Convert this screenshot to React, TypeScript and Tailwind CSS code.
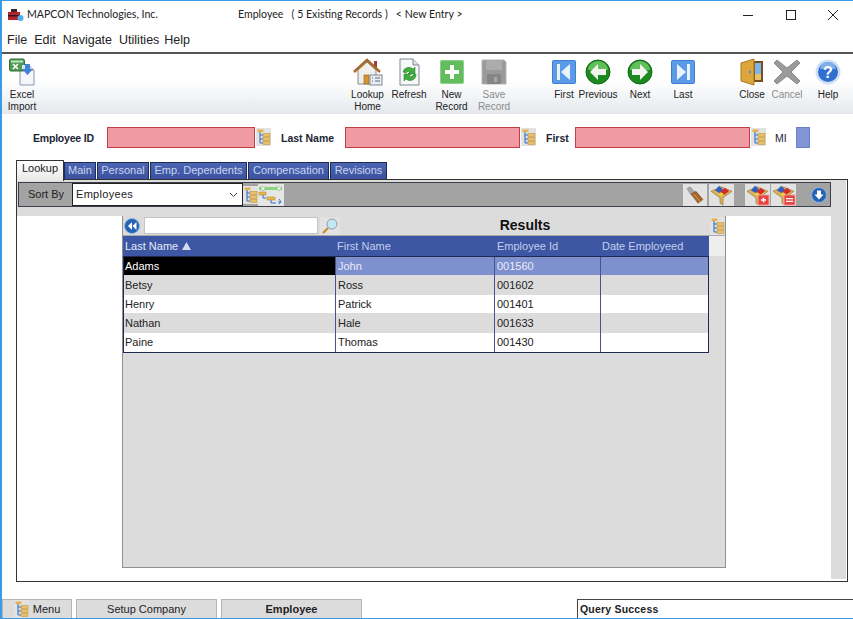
const Excel = () => (
  <svg width="28" height="28" viewBox="0 0 28 28" className="ml-[2px]">
    <path d="M11 7h9l5 5v15H11z" fill="#f4f6fa" stroke="#8b98ad" />
    <path d="M20 7v5h5" fill="#dfe5ee" stroke="#8b98ad" />
    <rect x="0.5" y="1" width="15" height="12" rx="1.5" fill="#4e9a52" stroke="#2f6f37" />
    <rect x="2" y="2.5" width="12" height="2" fill="#bfe3bd" />
    <path d="M4 6l5 5M9 6l-5 5" stroke="#fff" strokeWidth="1.6" />
    <path d="M13 7h6v4h-6z" fill="#dbe7f8" />
    <path d="M16 6h5v5h3l-5.500 6-5.500-6h3z" fill="#3f80d8" />
  </svg>
);

const Home = () => (
  <svg width="30" height="28" viewBox="0 0 30 28">
    <path d="M5 12v14h18V12L14 4z" fill="#f1efe9" stroke="#8a8a84" />
    <rect x="21" y="3" width="3" height="6" fill="#a8383a" />
    <path d="M1 14L14 2l13 12" fill="none" stroke="#a8672c" strokeWidth="2.400" />
    <rect x="11" y="17" width="5" height="9" fill="#d9952f" stroke="#8f5c1d" strokeWidth="0.6" />
    <rect x="17" y="17" width="12" height="10" fill="#e9edf2" stroke="#7c8794" />
    <path d="M19 20h1M22 20h5M19 23h1M22 23h5" stroke="#5c6b7c" />
  </svg>
);

const Refresh = () => (
  <svg width="22" height="28" viewBox="0 0 22 28">
    <path d="M2 1h13l6 6v20H2z" fill="#f6f8fa" stroke="#7c8794" />
    <path d="M15 1v6h6" fill="#dde3ea" stroke="#7c8794" />
    <path d="M5 14a6 6 0 0 1 10-3l2-2v7h-7l2-2a3 3 0 0 0-4 1z" fill="#3fae3f" stroke="#237a27" strokeWidth="0.5" />
    <path d="M18 16a6 6 0 0 1-10 5l-2 2v-7h7l-2 2a3 3 0 0 0 4-1z" fill="#3fae3f" stroke="#237a27" strokeWidth="0.5" />
  </svg>
);

const NewRecord = () => (
  <svg width="24" height="24" viewBox="0 0 24 24">
    <rect x="0.5" y="0.5" width="23" height="23" rx="1" fill="#62bd5c" stroke="#8fd18a" />
    <path d="M10 5h4v5h5v4h-5v5h-4v-5H5v-4h5z" fill="#fff" />
  </svg>
);

const SaveRecord = () => (
  <svg width="26" height="26" viewBox="0 0 26 26">
    <path d="M1 1h22l2 2v22H1z" fill="#9a9a9a" stroke="#b5b5b5" />
    <rect x="5" y="2" width="16" height="9" fill="#acacac" />
    <rect x="6" y="15" width="14" height="10" fill="#858585" />
    <rect x="13" y="18" width="3" height="5" fill="#a6a6a6" />
  </svg>
);

const NavSquare = ({ last }: { last?: boolean }) => (
  <svg width="24" height="24" viewBox="0 0 24 24">
    <rect x="0.5" y="0.5" width="23" height="23" rx="1" fill="#5a9ae6" stroke="#3e7fd0" />
    {last ? <path d="M6 4l9 8-9 8zM16 4h3v16h-3z" fill="#eaf3fd" /> : <path d="M18 4l-9 8 9 8zM5 4h3v16H5z" fill="#eaf3fd" />}
  </svg>
);

const NavCircle = ({ next }: { next?: boolean }) => (
  <svg width="26" height="26" viewBox="0 0 26 26">
    <circle cx="13" cy="13" r="12" fill="#1c8a1f" stroke="#0f6a14" />
    <path d="M3 11a10 9 0 0 1 20 0z" fill="#62c05c" />
    {next ? <path d="M5 10h8V5l8 8-8 8v-5H5z" fill="#f1f5ee" /> : <path d="M21 10h-8V5l-8 8 8 8v-5h8z" fill="#f1f5ee" />}
  </svg>
);

const Door = () => (
  <svg width="24" height="28" viewBox="0 0 24 28">
    <rect x="12" y="3" width="11" height="21" fill="#7a4d1e" />
    <rect x="15" y="5" width="6" height="17" fill="#7fb6e6" />
    <path d="M15 16h6v6h-6z" fill="#e3c26a" />
    <path d="M1 5l13-4v26L1 23z" fill="#dca63a" stroke="#a8761f" />
    <circle cx="10" cy="14" r="1.200" fill="#5c8fd0" />
  </svg>
);

const Cancel = () => (
  <svg width="26" height="26" viewBox="0 0 26 26">
    <path d="M3 1l10 8 10-8 3 3-9 9 9 9-3 3-10-8-10 8-3-3 9-9-9-9z" fill="#9b9b9b" stroke="#8a8a8a" />
  </svg>
);

const Help = () => (
  <svg width="26" height="26" viewBox="0 0 26 26">
    <circle cx="13" cy="13" r="12.500" fill="#cfe0f4" />
    <circle cx="13" cy="13" r="10" fill="#2f6fd0" />
    <path d="M5 10a8 7 0 0 1 16 0z" fill="#7faee8" />
    <text x="13" y="19" textAnchor="middle" fontSize="16" fontWeight="700" fontFamily="Liberation Sans" fill="#fff">?</text>
  </svg>
);

const Tree = () => (
  <svg width="15" height="18" viewBox="0 0 15 18" className="shrink-0">
    <rect width="15" height="18" fill="#e2e2e2" />
    <rect x="1.500" y="1.500" width="6" height="2.500" fill="#e8b04a" />
    <path d="M4 4v11M4 7h3M4 11h3M4 15h3" stroke="#2f6fd0" strokeWidth="1.100" fill="none" />
    <rect x="7" y="5.500" width="7" height="3" fill="#e9c06a" stroke="#b98a2c" strokeWidth="0.500" />
    <rect x="7" y="9.500" width="7" height="3" fill="#e9c06a" stroke="#b98a2c" strokeWidth="0.500" />
    <rect x="7" y="13.500" width="7" height="3" fill="#e9c06a" stroke="#b98a2c" strokeWidth="0.500" />
  </svg>
);

const TreeSort = () => (
  <svg width="26" height="22" viewBox="0 0 26 22" className="shrink-0">
    <rect width="26" height="22" fill="#e6e6e6" />
    <rect x="1" y="3" width="23" height="3" fill="#8bd67f" />
    <path d="M2 3l3 4 3-4zM18 3l3 4 3-4z" fill="#fff" stroke="#5aa650" strokeWidth="0.500" />
    <rect x="1" y="8" width="7" height="3" fill="#e9b850" stroke="#a87c22" strokeWidth="0.500" />
    <rect x="9" y="13" width="8" height="3" fill="#e9b850" stroke="#a87c22" strokeWidth="0.500" />
    <path d="M5 11v3h3M13 16v3h5M20 18l3 0M21 15l2 3-2 2" stroke="#2f6fd0" fill="none" />
  </svg>
);

const Brush = () => (
  <svg width="24" height="22" viewBox="0 0 24 24" preserveAspectRatio="none" className="shrink-0">
    <rect width="24" height="24" fill="#e2e2e2" />
    <path d="M4 5l3-2 5 6-4 3z" fill="#a9a9a9" stroke="#777" strokeWidth="0.500" />
    <path d="M8 11l5-3 7 9-5 4z" fill="#a5642c" stroke="#6f3f18" strokeWidth="0.500" />
    <path d="M11 11l6 8" stroke="#d9a56a" />
  </svg>
);

const Funnel = ({ mark }: { mark?: "plus" | "minus" }) => (
  <svg width="25" height="22" viewBox="0 0 25 24" preserveAspectRatio="none" className="shrink-0">
    <rect width="25" height="24" fill="#e2e2e2" />
    <path d="M2 8l10-5 11 5-9 7v8l-3-2v-6z" fill="#dcb15a" stroke="#8a6a20" strokeWidth="0.600" />
    <path d="M6 7l4-5 4 4-3 4z" fill="#2f5fc0" />
    <path d="M11 9l5-5 4 4-5 4z" fill="#d42a2a" />
    <path d="M9 11l3-2 3 2-3 2z" fill="#e9d33a" />
    {mark && <rect x="13" y="12" width="11" height="11" fill="#e8433f" stroke="#f3a09c" />}
    {mark === "plus" && <path d="M16 17.500h5M18.500 15v5" stroke="#fff" strokeWidth="1.600" />}
    {mark === "minus" && <path d="M15 16h7M15 19h7" stroke="#fff" strokeWidth="1.400" />}
  </svg>
);

const RoundArrow = ({ down }: { down?: boolean }) => (
  <svg width="16" height="16" viewBox="0 0 16 16" className="shrink-0">
    <circle cx="8" cy="8" r="7.500" fill="#2563b5" stroke="#8fb4e2" />
    {down ? (
      <path d="M6 3.500h4v4h2.500L8 12.500 3.500 7.500H6z" fill="#fff" />
    ) : (
      <path d="M8 4L4 8l4 4zM12.500 4l-4 4 4 4z" fill="#fff" />
    )}
  </svg>
);

const Magnifier = () => (
  <svg width="20" height="18" viewBox="0 0 20 18" className="shrink-0">
    <rect width="20" height="18" fill="#e2e2e2" />
    <circle cx="12" cy="7" r="5" fill="#c4e6f5" stroke="#8aa0ac" />
    <path d="M8 11l-5 5" stroke="#c98a24" strokeWidth="2.200" />
  </svg>
);

const tools = [
  { w: "w-[32px]", label: ["First"], icon: <NavSquare /> },
  { w: "w-[36px]", label: ["Previous"], icon: <NavCircle /> },
  { w: "w-[48px]", label: ["Next"], icon: <NavCircle next /> },
  { w: "w-[38px]", label: ["Last"], icon: <NavSquare last /> },
];

const ToolButton = ({ w, label, icon, off }: { w: string; label: string[]; icon: React.ReactNode; off?: boolean }) => (
  <div className={`${w} flex flex-col items-center shrink-0`}>
    <div className="h-[31px] mb-[2px] flex items-center justify-center">{icon}</div>
    {label.map((l) => (
      <span key={l} className={`text-[10px] leading-[12px] whitespace-nowrap ${off ? "text-[#8c8c8c]" : "text-[#222]"}`}>
        {l}
      </span>
    ))}
  </div>
);

const rows = [
  { cells: ["Adams", "John", "001560"], h: "h-[18px]" },
  { cells: ["Betsy", "Ross", "001602"], h: "h-[20px]" },
  { cells: ["Henry", "Patrick", "001401"], h: "h-[18px]" },
  { cells: ["Nathan", "Hale", "001633"], h: "h-[20px]" },
  { cells: ["Paine", "Thomas", "001430"], h: "h-[19px]" },
];

const tabs = [
  { t: "Main", w: "w-[32px]" },
  { t: "Personal", w: "w-[52px]" },
  { t: "Emp. Dependents", w: "w-[97px]" },
  { t: "Compensation", w: "w-[81px]" },
  { t: "Revisions", w: "w-[57px]" },
];

export default function App() {
  return (
    <div className="w-[853px] h-[619px] overflow-hidden flex flex-col bg-white border-t border-b border-l-2 border-[#3b9ae6] font-['Liberation_Sans',Arial,sans-serif] text-[#222]">
      {/* Title bar */}
      <div className="h-[27px] shrink-0 flex items-center pl-[6px]">
        <svg width="16" height="14" viewBox="0 0 16 14" className="shrink-0">
          <rect x="0" y="4" width="12" height="8" fill="#b5232b" />
          <rect x="3" y="1" width="6" height="3" fill="#3a2326" />
          <rect x="0" y="7" width="12" height="1.500" fill="#2a1a1c" />
          <circle cx="12.500" cy="10" r="3" fill="#4db0e8" />
        </svg>
        <span className="ml-[3px] w-[211px] font-['Lato',sans-serif] text-[10.6px] whitespace-nowrap">MAPCON Technologies, Inc.</span>
        <span className="font-['Lato',sans-serif] text-[10.6px] whitespace-pre">Employee   ( 5 Existing Records )   &lt; New Entry &gt;</span>
        <div className="ml-auto flex items-center">
          <svg width="12" height="12" viewBox="0 0 12 12" className="mr-[31px]"><path d="M1 6.500h10" stroke="#222" /></svg>
          <svg width="12" height="12" viewBox="0 0 12 12" className="mr-[30px]"><rect x="1.500" y="1.500" width="9" height="9" fill="none" stroke="#222" /></svg>
          <svg width="12" height="12" viewBox="0 0 12 12" className="mr-[14px]"><path d="M1 1l10 10M11 1L1 11" stroke="#222" /></svg>
        </div>
      </div>

      {/* Menu */}
      <div className="h-[26px] shrink-0 border-b-2 border-[#555] flex gap-[7px] pl-[5px] pt-[5px] text-[12.5px] leading-[15px]">
        <span>File</span>
        <span>Edit</span>
        <span>Navigate</span>
        <span>Utilities</span>
        <span className="-ml-[2px]">Help</span>
      </div>

      {/* Toolbar */}
      <div className="h-[60px] shrink-0 flex pt-[2px] bg-linear-to-b from-white from-45% to-[#e4e8ec]">
        <ToolButton w="w-[40px]" label={["Excel", "Import"]} icon={<Excel />} />
        <div className="w-[305px] shrink-0" />
        <ToolButton w="w-[41px]" label={["Lookup", "Home"]} icon={<Home />} />
        <ToolButton w="w-[42px]" label={["Refresh"]} icon={<Refresh />} />
        <ToolButton w="w-[43px]" label={["New", "Record"]} icon={<NewRecord />} />
        <ToolButton w="w-[42px]" label={["Save", "Record"]} icon={<SaveRecord />} off />
        <div className="w-[33px] shrink-0" />
        {tools.map((t) => (
          <ToolButton key={t.label[0]} w={t.w} label={t.label} icon={t.icon} />
        ))}
        <div className="w-[32px] shrink-0" />
        <ToolButton w="w-[36px]" label={["Close"]} icon={<Door />} />
        <ToolButton w="w-[34px]" label={["Cancel"]} icon={<Cancel />} off />
        <ToolButton w="w-[48px]" label={["Help"]} icon={<Help />} />
      </div>

      {/* Key fields */}
      <div className="h-[46px] shrink-0 flex items-start pt-[13px] text-[10.5px] font-bold text-[#1c2433]">
        <span className="w-[105px] pl-[31px] leading-[23px] tracking-[-0.2px] shrink-0">Employee ID</span>
        <div className="w-[148px] h-[21px] shrink-0 bg-[#f09aa3] border border-[#c23f45]" />
        <div className="ml-[1px] mt-[1px]"><Tree /></div>
        <span className="w-[74px] pl-[10px] leading-[23px] shrink-0">Last Name</span>
        <div className="w-[175px] h-[21px] shrink-0 bg-[#f09aa3] border border-[#c23f45]" />
        <div className="ml-[1px] mt-[1px]"><Tree /></div>
        <span className="w-[39px] pl-[10px] leading-[23px] shrink-0">First</span>
        <div className="w-[175px] h-[21px] shrink-0 bg-[#f09aa3] border border-[#c23f45]" />
        <div className="ml-[1px] mt-[1px]"><Tree /></div>
        <span className="w-[30px] pl-[9px] leading-[23px] shrink-0 font-normal">MI</span>
        <div className="w-[14px] h-[21px] shrink-0 bg-[#8294d3] border border-[#6a80c8]" />
      </div>

      {/* Tabs */}
      <div className="h-[19px] shrink-0 flex items-end pl-[14px] text-[11px] relative z-10">
        <div className="w-[48px] h-[21px] -mb-[2px] bg-linear-to-b from-white to-[#e8e8e8] border border-b-0 border-[#333] text-center leading-[15px] shrink-0 rounded-t-[1px]">Lookup</div>
        {tabs.map((tab) => (
          <div key={tab.t} className={`${tab.w} h-[17px] mr-[1px] shrink-0 bg-linear-to-b from-[#4d66b4] to-[#3a52a0] border border-b-0 border-[#1f2b55] text-[#c9d3ee] text-center leading-[15px] whitespace-nowrap`}>
            {tab.t}
          </div>
        ))}
      </div>

      {/* Panel */}
      <div className="w-[832px] h-[403px] ml-[14px] shrink-0 border border-[#333] bg-white flex">
        <div className="w-[814px] shrink-0 flex flex-col">
          {/* Sort bar */}
          <div className="bg-[#dcdcdc] h-[36px] shrink-0 pt-[2px] pl-[1px]">
            <div className="h-[25px] bg-[#a3a3a3] border border-[#3a3f4a] flex items-center text-[11px]">
              <span className="w-[53px] pl-[9px] shrink-0 text-[#222]">Sort By</span>
              <div className="w-[171px] h-[23px] shrink-0 bg-white border border-[#222] flex items-center justify-between pl-[3px] pr-[4px] tracking-[0.3px]">
                Employees
                <svg width="9" height="6" viewBox="0 0 9 6"><path d="M1 1l3.500 3.500L8 1" fill="none" stroke="#444" /></svg>
              </div>
              <Tree />
              <TreeSort />
              <div className="ml-auto flex items-center gap-[2px]">
                <Brush />
                <Funnel />
              </div>
              <div className="ml-[11px] flex items-center gap-[1px]">
                <Funnel mark="plus" />
                <Funnel mark="minus" />
              </div>
              <div className="ml-[15px] mr-[3px]"><RoundArrow down /></div>
            </div>
          </div>

          {/* Results panel */}
          <div className="flex-1 bg-white pl-[105px]">
            <div className="w-[604px] h-[352px] bg-[#dcdcdc] border-b border-l border-r border-[#8f8f8f] flex flex-col">
              <div className="h-[19px] shrink-0 flex items-center pl-[1px]">
                <RoundArrow />
                <div className="ml-[4px] w-[174px] h-[17px] shrink-0 bg-white border border-[#c4c4c4]" />
                <div className="ml-[2px]"><Magnifier /></div>
                <span className="w-[370px] shrink-0 text-center text-[14px] font-bold text-[#111]">Results</span>
                <Tree />
              </div>
              <div className="flex-1 flex flex-col border-t border-[#a9a9a9]">
                <div className="flex">
                  <div className="w-[586px] shrink-0">
                    <div className="h-[20px] grid grid-cols-[212px_159px_106px_109px] items-center bg-[#3e57a5] text-[11px] text-[#c4cfeb]">
                      <span className="pl-[2px] text-[#e6ebf7] flex items-center gap-[4px]">
                        Last Name
                        <svg width="9" height="8" viewBox="0 0 9 8"><path d="M4.500 0L9 8H0z" fill="#d5dcf0" /></svg>
                      </span>
                      <span className="pl-[2px]">First Name</span>
                      <span className="pl-[3px]">Employee Id</span>
                      <span className="pl-[2px]">Date Employeed</span>
                    </div>
                    <div className="border border-[#1e2a4e] text-[11px]">
                      {rows.map((r, i) => (
                        <div
                          key={r.cells[0]}
                          className={`${r.h} grid grid-cols-[211px_159px_106px_108px] items-stretch ${i === 0 ? "bg-[#7f90cf] text-[#e8ecf8]" : i % 2 === 1 ? "bg-[#dcdcdc]" : "bg-white"}`}
                        >
                          <span className={`flex items-center pl-[1px] ${i === 0 ? "bg-black text-white" : ""}`}>{r.cells[0]}</span>
                          <span className="flex items-center pl-[2px] border-l border-[#45558a]">{r.cells[1]}</span>
                          <span className="flex items-center pl-[2px] border-l border-[#45558a]">{r.cells[2]}</span>
                          <span className="border-l border-[#45558a]" />
                        </div>
                      ))}
                    </div>
                  </div>
                  <div className="w-[16px] shrink-0">
                    <div className="h-[20px] bg-[#eeeeee]" />
                  </div>
                </div>
              </div>
            </div>
          </div>
        </div>
        <div className="w-[15px] shrink-0 mb-[2px] bg-[#dcdcdc]" />
      </div>

      {/* Bottom bar */}
      <div className="flex-1 flex items-end text-[11px]">
        <div className="w-[70px] h-[19px] shrink-0 bg-[#dcdcdc] border border-b-0 border-[#b5b5b5] flex items-center justify-center gap-[4px]">
          <Tree />
          Menu
        </div>
        <div className="ml-[4px] w-[141px] h-[19px] shrink-0 bg-[#dcdcdc] border border-b-0 border-[#b5b5b5] text-center leading-[18px]">Setup Company</div>
        <div className="ml-[4px] w-[141px] h-[19px] shrink-0 bg-[#dcdcdc] border border-b-0 border-[#b5b5b5] text-center leading-[18px] font-bold">Employee</div>
        <div className="ml-[215px] flex-1 h-[19px] bg-white border-t border-l border-[#444] pl-[2px] leading-[18px] font-bold text-[10.5px] tracking-[0.2px]">Query Success</div>
      </div>
    </div>
  );
}
